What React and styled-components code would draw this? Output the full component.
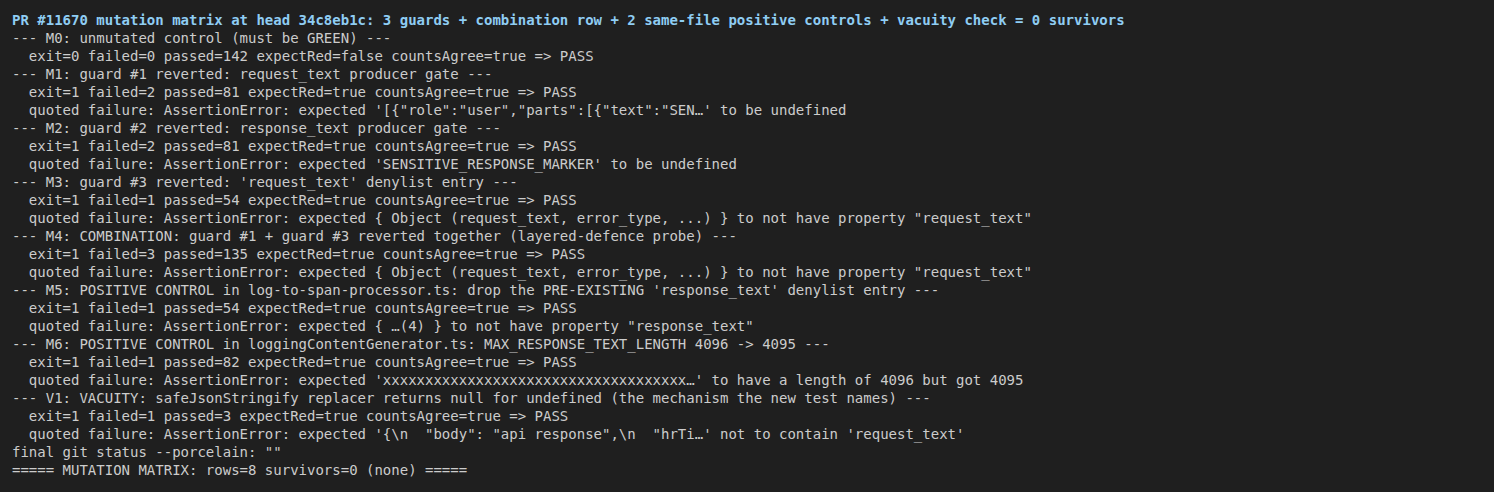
import React from "react";
import styled, { createGlobalStyle } from "styled-components";

const Global = createGlobalStyle`
  html, body { margin: 0; padding: 0; background: #1f1f1f; }
  #root { min-height: 492px; }
`;

const Terminal = styled.pre`
  margin: 0;
  padding: 11px 12px;
  min-height: 492px;
  box-sizing: border-box;
  background: #1f1f1f;
  color: #cccccc;
  font-family: "DejaVu Sans Mono", "Liberation Mono", monospace;
  font-size: 14px;
  line-height: 18px;
  white-space: pre;
`;

const Line = styled.div`
  height: 18px;
  color: ${(p) => (p.$head ? "#8fcdf3" : "#cccccc")};
  font-weight: ${(p) => (p.$head ? 700 : 400)};
`;

const xs = "x".repeat(36);

const lines = [
  "--- M0: unmutated control (must be GREEN) ---",
  "  exit=0 failed=0 passed=142 expectRed=false countsAgree=true => PASS",
  "--- M1: guard #1 reverted: request_text producer gate ---",
  "  exit=1 failed=2 passed=81 expectRed=true countsAgree=true => PASS",
  "  quoted failure: AssertionError: expected '[{\"role\":\"user\",\"parts\":[{\"text\":\"SEN…' to be undefined",
  "--- M2: guard #2 reverted: response_text producer gate ---",
  "  exit=1 failed=2 passed=81 expectRed=true countsAgree=true => PASS",
  "  quoted failure: AssertionError: expected 'SENSITIVE_RESPONSE_MARKER' to be undefined",
  "--- M3: guard #3 reverted: 'request_text' denylist entry ---",
  "  exit=1 failed=1 passed=54 expectRed=true countsAgree=true => PASS",
  "  quoted failure: AssertionError: expected { Object (request_text, error_type, ...) } to not have property \"request_text\"",
  "--- M4: COMBINATION: guard #1 + guard #3 reverted together (layered-defence probe) ---",
  "  exit=1 failed=3 passed=135 expectRed=true countsAgree=true => PASS",
  "  quoted failure: AssertionError: expected { Object (request_text, error_type, ...) } to not have property \"request_text\"",
  "--- M5: POSITIVE CONTROL in log-to-span-processor.ts: drop the PRE-EXISTING 'response_text' denylist entry ---",
  "  exit=1 failed=1 passed=54 expectRed=true countsAgree=true => PASS",
  "  quoted failure: AssertionError: expected { …(4) } to not have property \"response_text\"",
  "--- M6: POSITIVE CONTROL in loggingContentGenerator.ts: MAX_RESPONSE_TEXT_LENGTH 4096 -> 4095 ---",
  "  exit=1 failed=1 passed=82 expectRed=true countsAgree=true => PASS",
  `  quoted failure: AssertionError: expected '${xs}…' to have a length of 4096 but got 4095`,
  "--- V1: VACUITY: safeJsonStringify replacer returns null for undefined (the mechanism the new test names) ---",
  "  exit=1 failed=1 passed=3 expectRed=true countsAgree=true => PASS",
  "  quoted failure: AssertionError: expected '{\\n  \"body\": \"api response\",\\n  \"hrTi…' not to contain 'request_text'",
  "final git status --porcelain: \"\"",
  "===== MUTATION MATRIX: rows=8 survivors=0 (none) =====",
];

export default function App() {
  return (
    <>
      <Global />
      <Terminal>
        <Line $head>
          PR #11670 mutation matrix at head 34c8eb1c: 3 guards + combination row + 2 same-file positive controls + vacuity check = 0 survivors
        </Line>
        {lines.map((l, i) => (
          <Line key={i}>{l}</Line>
        ))}
      </Terminal>
    </>
  );
}
